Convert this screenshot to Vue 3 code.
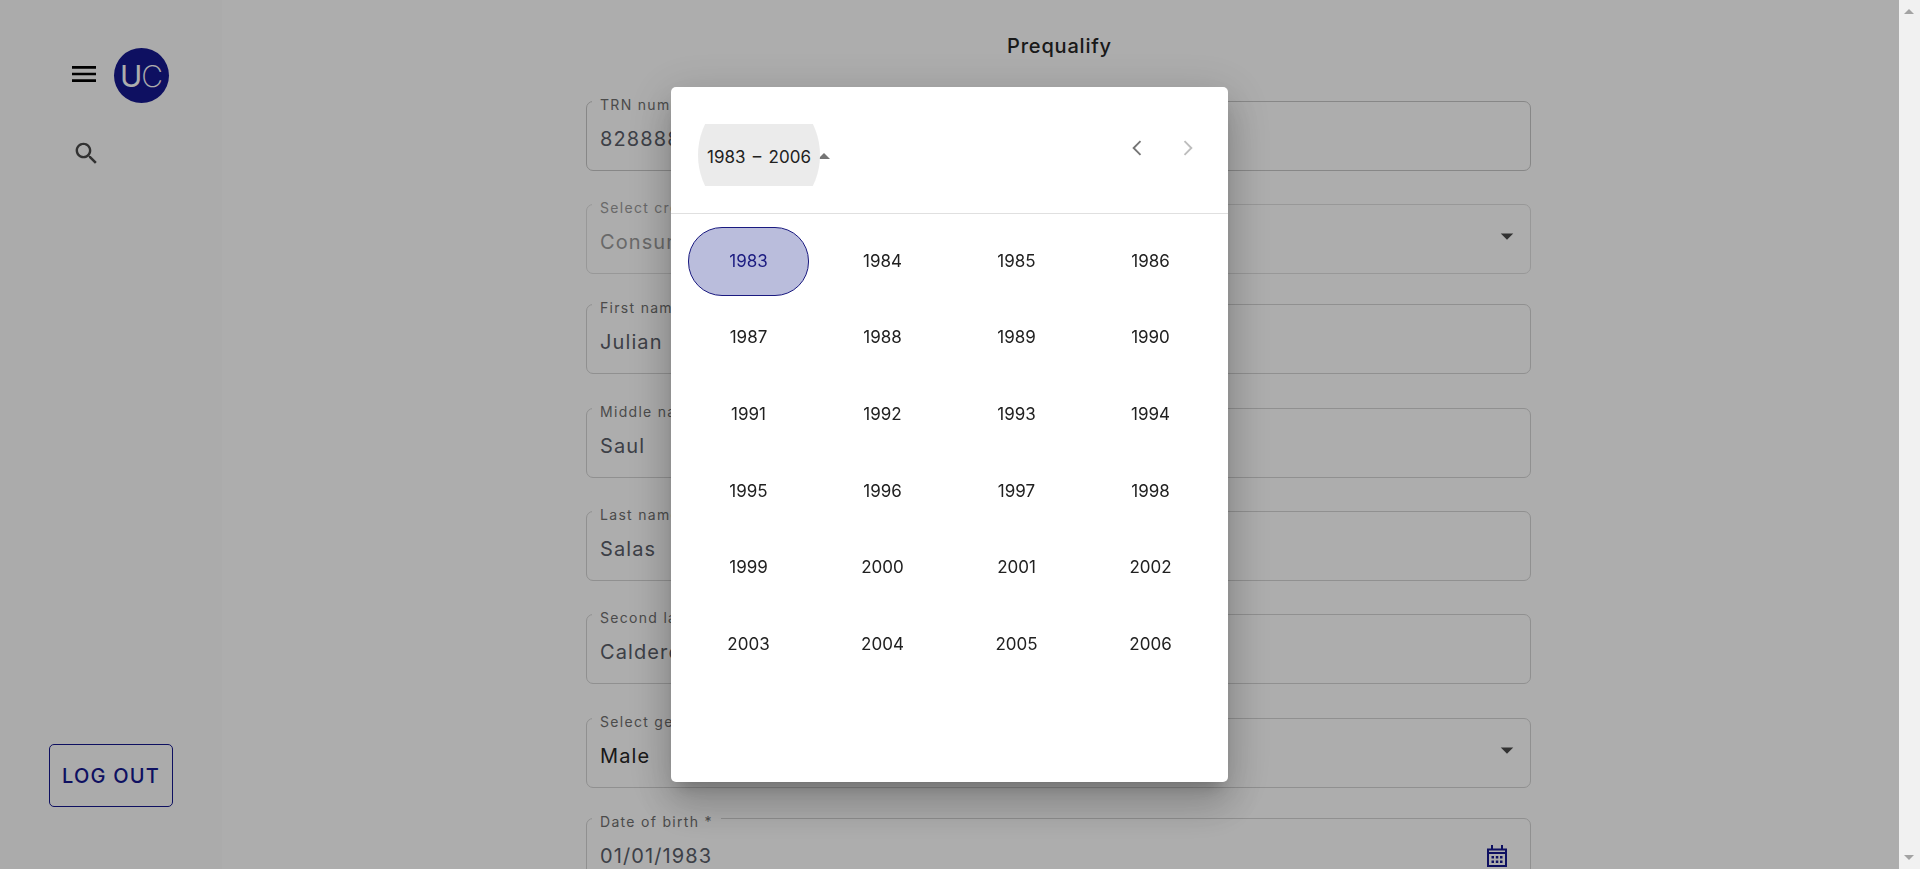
<template>
  <div class="page">
    <div class="shell">
      <aside class="sidebar">
        <div class="brand">
          <svg class="menu-icon" viewBox="0 0 24 24"><path d="M3 18h18v-2H3v2zm0-5h18v-2H3v2zm0-7v2h18V6H3z" /></svg>
          <div class="logo"><span class="logo-u">U</span><span class="logo-c">C</span></div>
        </div>
        <svg class="search-icon" viewBox="0 0 24 24"><path d="M15.5 14h-.79l-.28-.27C15.41 12.59 16 11.11 16 9.5 16 5.91 13.09 3 9.5 3S3 5.91 3 9.5 5.91 16 9.5 16c1.61 0 3.09-.59 4.23-1.57l.27.28v.79l5 4.99L20.49 19l-4.99-5zm-6 0C7.01 14 5 11.99 5 9.5S7.01 5 9.5 5 14 7.01 14 9.5 11.99 14 9.5 14z" /></svg>
        <button class="logout">LOG OUT</button>
      </aside>

      <main class="content">
        <h1 class="title">Prequalify</h1>
        <form class="form">
          <div
            v-for="f in fields"
            :key="f.label"
            class="field"
            :class="{ 'field--select': f.select, 'field--disabled': f.disabled, 'field--dark': f.dark }"
          >
            <label class="field-label">{{ f.label }}</label>
            <div class="field-value">{{ f.value }}</div>
            <svg v-if="f.select" class="field-arrow" viewBox="0 0 24 24"><path d="M7 10l5 5 5-5z" /></svg>
            <svg v-if="f.date" class="field-calendar" viewBox="0 0 20 22">
              <path class="cal-line" d="M5 0v4M15 0v4M1 4.5h18v16.5H1zM1 8h18" />
              <path class="cal-dots" d="M4.5 11h2.5v2.5H4.5zM8.8 11h2.5v2.5H8.8zM13 11h2.5v2.5H13zM4.5 15.5h2.5V18H4.5zM8.8 15.5h2.5V18H8.8zM13 15.5h2.5V18H13z" />
            </svg>
          </div>
        </form>
      </main>
    </div>

    <div class="scrollbar">
      <span class="scroll-up"></span>
      <span class="scroll-down"></span>
    </div>

    <div class="overlay"></div>

    <div class="dialog" role="dialog">
      <header class="dialog-head">
        <div class="range">
          <div class="range-btn">1983 – 2006</div>
          <span class="range-caret"></span>
        </div>
        <div class="nav">
          <svg class="nav-icon" viewBox="0 0 24 24"><path d="M14.8 6.5 9.3 12l5.5 5.5" /></svg>
          <svg class="nav-icon nav-icon--off" viewBox="0 0 24 24"><path d="M9.2 6.5 14.7 12l-5.5 5.5" /></svg>
        </div>
      </header>
      <div class="years">
        <div v-for="y in years" :key="y" class="year" :class="{ 'year--on': y === 1983 }">{{ y }}</div>
      </div>
    </div>
  </div>
</template>

<script setup>
const fields = [
  { label: 'TRN number *', value: '828888888', dark: true },
  { label: 'Select credit type', value: 'Consumer', select: true, disabled: true },
  { label: 'First name *', value: 'Julian' },
  { label: 'Middle name', value: 'Saul' },
  { label: 'Last name *', value: 'Salas' },
  { label: 'Second last name', value: 'Calderon' },
  { label: 'Select gender *', value: 'Male', select: true },
  { label: 'Date of birth *', value: '01/01/1983', date: true }
]

const years = Array.from({ length: 24 }, (_, i) => 1983 + i)
</script>

<style>
html,
body {
  margin: 0;
  overflow: hidden;
}
</style>

<style scoped>
.page {
  display: flex;
  height: 869px;
  overflow: hidden;
  font-family: Inter, "Liberation Sans", sans-serif;
  background: #fff;
}

.shell {
  display: flex;
  width: 1899px;
  flex: none;
}

/* Sidebar */
.sidebar {
  display: flex;
  flex-direction: column;
  box-sizing: border-box;
  width: 222px;
  height: 869px;
  padding: 48px 0 62px;
  background: #fcfcfc;
}

.brand {
  display: flex;
  align-items: center;
  padding-left: 68px;
}

.menu-icon {
  width: 32px;
  height: 32px;
  margin-right: 14px;
  margin-top: -3px;
  fill: #000;
}

.logo {
  display: flex;
  align-items: center;
  justify-content: center;
  width: 55px;
  height: 55px;
  border-radius: 50%;
  background: #15188f;
  color: #fff;
  font-size: 30px;
  line-height: 1;
}

.logo-u {
  font-weight: 400;
}

.logo-c {
  font-weight: 200;
  margin-left: -1px;
}

.search-icon {
  width: 29px;
  height: 29px;
  margin: 36px 0 0 72px;
  fill: #4a4a4a;
}

.logout {
  box-sizing: border-box;
  width: 124px;
  height: 63px;
  margin: auto 0 0 49px;
  padding: 0;
  border: 1px solid #15188f;
  border-radius: 5px;
  background: transparent;
  color: #15188f;
  font-family: inherit;
  font-size: 20px;
  font-weight: 500;
  letter-spacing: 1.2px;
}

/* Form */
.content {
  flex: 1;
  padding-top: 34px;
}

.title {
  width: 945px;
  margin: 0 0 43px 365px;
  color: #262626;
  font-size: 20px;
  font-weight: 500;
  line-height: 24px;
  letter-spacing: 0.8px;
  text-align: center;
}

.form {
  width: 945px;
  margin-left: 364px;
}

.field {
  position: relative;
  box-sizing: border-box;
  height: 69.5px;
  margin-bottom: 33.5px;
  padding: 25px 13px 0;
  border: 1px solid #d4d4d4;
  border-radius: 7px;
}

/* the rows are not evenly spaced in the original form */
.field:nth-child(2) {
  margin-bottom: 30.5px;
}

.field:nth-child(3) {
  margin-bottom: 34.5px;
}

.field:nth-child(6) {
  margin-bottom: 34.5px;
}

.field:nth-child(7) {
  margin-bottom: 30.5px;
}

.field--dark {
  border-color: #c8c8c8;
}

.field--disabled {
  border-color: #e0e0e0;
}

.field-label {
  position: absolute;
  top: -6px;
  left: 5px;
  padding: 0 8px;
  background: #fff;
  color: #6f6f6f;
  font-size: 14px;
  line-height: 17px;
  letter-spacing: 1.3px;
}

.field-value {
  color: #5a5e69;
  font-size: 20px;
  line-height: 24px;
  letter-spacing: 1.1px;
}

.field--select .field-value {
  color: #262626;
}

.field--disabled .field-label,
.field--disabled .field-value {
  color: #9b9b9b;
}

.field-arrow {
  position: absolute;
  top: 16px;
  right: 8px;
  width: 30px;
  height: 30px;
  fill: #4a4a4a;
}

.field-calendar {
  position: absolute;
  top: 26px;
  right: 23px;
  width: 20px;
  height: 22px;
}

.cal-line {
  fill: none;
  stroke: #15188f;
  stroke-width: 2;
}

.cal-dots {
  fill: #15188f;
}

/* Fake window scrollbar */
.scrollbar {
  position: relative;
  flex: none;
  width: 21px;
  background: #f1f1f1;
}

.scroll-up,
.scroll-down {
  position: absolute;
  left: 5px;
  border-left: 5px solid transparent;
  border-right: 5px solid transparent;
}

.scroll-up {
  top: 9px;
  border-bottom: 5px solid #a3a3a3;
}

.scroll-down {
  top: 855px;
  border-top: 5px solid #a3a3a3;
}

/* Dialog */
.overlay {
  position: fixed;
  top: 0;
  left: 0;
  width: 1899px;
  height: 869px;
  background: rgba(0, 0, 0, 0.32);
}

.dialog {
  position: fixed;
  top: 87px;
  left: 671px;
  box-sizing: border-box;
  width: 557px;
  height: 695px;
  border-radius: 5px;
  background: #fff;
  box-shadow:
    0 11px 15px -7px rgba(0, 0, 0, 0.2),
    0 24px 38px 3px rgba(0, 0, 0, 0.14),
    0 9px 46px 8px rgba(0, 0, 0, 0.12);
}

.dialog-head {
  display: flex;
  justify-content: space-between;
  box-sizing: border-box;
  height: 127px;
  padding: 37px 25px 0 27px;
  border-bottom: 1px solid #e0e0e0;
}

.range {
  display: flex;
  align-items: center;
  height: 62px;
}

.range-btn {
  display: flex;
  align-items: center;
  justify-content: center;
  box-sizing: border-box;
  width: 122px;
  height: 62px;
  padding-top: 3px;
  background: #ebebeb;
  clip-path: ellipse(61px 66px at center);
  color: #212121;
  font-size: 17px;
  word-spacing: 2.5px;
}

.range-caret {
  margin: 2px 0 0 -2px;
  border-left: 6.5px solid transparent;
  border-right: 6.5px solid transparent;
  border-bottom: 6.5px solid #757575;
}

.nav {
  display: flex;
  gap: 21px;
  padding-top: 9px;
}

.nav-icon {
  width: 30px;
  height: 30px;
  fill: none;
  stroke: #757575;
  stroke-width: 1.5;
}

.nav-icon--off {
  stroke: #bdbdbd;
}

.years {
  display: grid;
  grid-template-columns: repeat(4, 121px);
  grid-auto-rows: 68.6px;
  gap: 8px 13px;
  padding: 13px 0 0 17px;
}

.year {
  display: flex;
  align-items: center;
  justify-content: center;
  box-sizing: border-box;
  padding-bottom: 1px;
  color: #212121;
  font-size: 17px;
}

.year--on {
  border: 1px solid #1a1a80;
  border-radius: 34px;
  background: rgba(26, 35, 140, 0.3);
  color: #1a1a80;
}
</style>
